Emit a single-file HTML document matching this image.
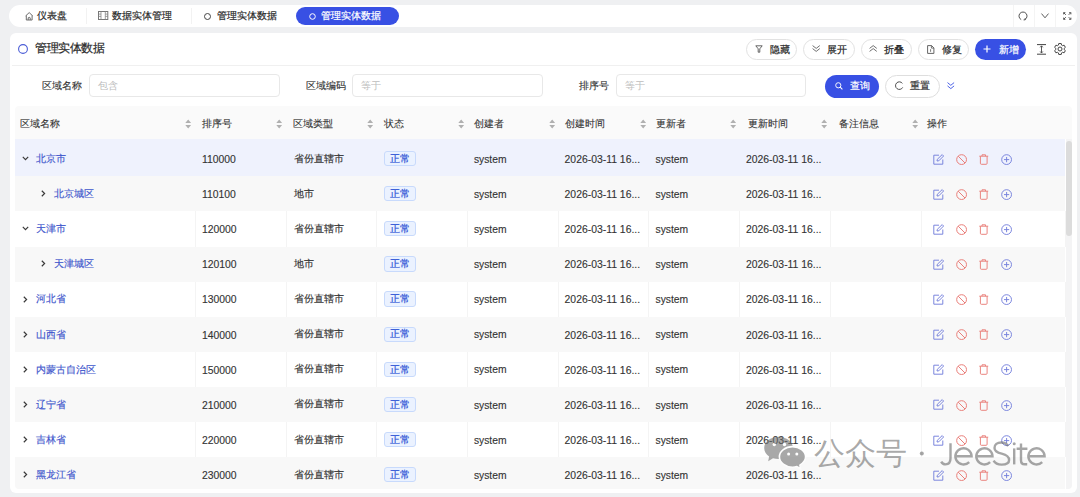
<!DOCTYPE html><html><head><meta charset="utf-8"><style>
*{box-sizing:border-box;margin:0;padding:0}
html,body{width:1080px;height:497px;overflow:hidden;background:#eff0f2;font-family:"Liberation Sans",sans-serif;color:#333}
div,span,svg{position:absolute}
.t{white-space:nowrap;line-height:1}
.cj{font-size:10px}
svg{overflow:visible}
</style></head><body><div style="left:9px;top:5px;width:1068.00px;height:22.00px;background:#fff;border-radius:11px"></div>
<svg style="left:24.5px;top:11.5px" width="8.5" height="8.5" viewBox="0 0 8.5 8.5"><path d="M0.7 3.9 L4.2 0.6 L7.7 3.9 M1.3 3.4 V8 H7.1 V3.4 M3.2 8 V5.8 Q4.2 4.8 5.2 5.8 V8" fill="none" stroke="#666" stroke-width="0.95" stroke-linejoin="round"/></svg>
<div class="t" style="left:37px;top:11.00px;height:10px;line-height:10px;font-size:10px;color:#2c2c2c;-webkit-text-stroke:0.2px #2c2c2c;">仪表盘</div>
<div style="left:86px;top:8px;width:0.80px;height:16.00px;background:#f2f2f2"></div>
<svg style="left:98px;top:11px" width="10.5" height="9" viewBox="0 0 10.5 9"><rect x="0.5" y="0.5" width="9.3" height="8" fill="none" stroke="#777" stroke-width="1"/><path d="M3 0.5 V8.5 M7.3 0.5 V8.5 M0.5 3.1 H3 M0.5 5.4 H3 M7.3 3.1 H9.8 M7.3 5.4 H9.8" fill="none" stroke="#888" stroke-width="0.8"/></svg>
<div class="t" style="left:111.5px;top:11.00px;height:10px;line-height:10px;font-size:10px;color:#2c2c2c;-webkit-text-stroke:0.2px #2c2c2c;">数据实体管理</div>
<div style="left:191px;top:8px;width:0.80px;height:16.00px;background:#f2f2f2"></div>
<svg style="left:204px;top:12.5px" width="7" height="7" viewBox="0 0 7 7"><circle cx="3.5" cy="3.5" r="3" fill="none" stroke="#444" stroke-width="1"/></svg>
<div class="t" style="left:216.5px;top:11.00px;height:10px;line-height:10px;font-size:10px;color:#2c2c2c;-webkit-text-stroke:0.2px #2c2c2c;">管理实体数据</div>
<div style="left:296px;top:7px;width:103.00px;height:17.50px;background:#3850e4;border-radius:9px"></div>
<svg style="left:309px;top:12.5px" width="7" height="7" viewBox="0 0 7 7"><circle cx="3.5" cy="3.5" r="2.8" fill="none" stroke="#fff" stroke-width="1"/></svg>
<div class="t" style="left:321px;top:11.00px;height:10px;line-height:10px;font-size:10px;color:#fff;-webkit-text-stroke:0.2px #fff;">管理实体数据</div>
<div style="left:1012.5px;top:5px;width:1.00px;height:22.00px;background:#f4f4f4"></div>
<div style="left:1033.5px;top:5px;width:1.00px;height:22.00px;background:#f4f4f4"></div>
<div style="left:1055px;top:5px;width:1.00px;height:22.00px;background:#f4f4f4"></div>
<svg style="left:1017.8px;top:11px" width="10" height="10" viewBox="0 0 10 10"><path d="M3.2 8.6 A4 4 0 1 1 6.8 8.6" fill="none" stroke="#555" stroke-width="1"/><path d="M5.6 8.9 L7.3 8.7 L7.1 7.2" fill="none" stroke="#555" stroke-width="1"/></svg>
<svg style="left:1041px;top:12.5px" width="8" height="6" viewBox="0 0 8 6"><path d="M0.5 0.6 L4 4.8 L7.5 0.6" fill="none" stroke="#555" stroke-width="0.95"/></svg>
<svg style="left:1062.5px;top:11.6px" width="8.5" height="8" viewBox="0 0 8.5 8"><path d="M0.8 0.8 L2.8 2.8 M7.7 0.8 L5.7 2.8 M0.8 7.2 L2.8 5.2 M7.7 7.2 L5.7 5.2" fill="none" stroke="#555" stroke-width="1"/><path d="M0.6 2.4 V0.6 H2.4 M6.1 0.6 H7.9 V2.4 M0.6 5.6 V7.4 H2.4 M6.1 7.4 H7.9 V5.6" fill="none" stroke="#555" stroke-width="0.9"/></svg>
<div style="left:10px;top:33px;width:1067.00px;height:460.00px;background:#fff;border-radius:6px"></div>
<svg style="left:18px;top:43.5px" width="10" height="10" viewBox="0 0 10 10"><circle cx="5" cy="5" r="4.4" fill="none" stroke="#4a5cd6" stroke-width="1.1"/></svg>
<div class="t" style="left:35.3px;top:42.40px;height:12px;line-height:12px;font-size:12px;color:#2a2a2a;-webkit-text-stroke:0.2px #2a2a2a;letter-spacing:-0.55px">管理实体数据</div>
<div style="left:12px;top:65px;width:1063.00px;height:1.00px;background:#f0f0f0"></div>
<div style="left:746px;top:38.5px;width:51.00px;height:21.00px;background:#fff;border:1px solid #e2e2e2;border-radius:11px"></div>
<svg style="left:754.5px;top:45px" width="8" height="8" viewBox="0 0 8 8"><path d="M0.8 0.8 H7.2 L4.8 3.8 V7.2 H3.2 V3.8 Z" fill="none" stroke="#555" stroke-width="0.9"/></svg>
<div class="t" style="left:770px;top:44.60px;height:10px;line-height:10px;font-size:10px;color:#262626;-webkit-text-stroke:0.2px #262626;">隐藏</div>
<div style="left:803px;top:38.5px;width:51.50px;height:21.00px;background:#fff;border:1px solid #e2e2e2;border-radius:11px"></div>
<svg style="left:811.8px;top:45.3px" width="8.4" height="7" viewBox="0 0 8.4 7"><path d="M0.6 0.6 L4.2 3.4 L7.8 0.6 M0.6 3.6 L4.2 6.4 L7.8 3.6" fill="none" stroke="#555" stroke-width="0.85"/></svg>
<div class="t" style="left:827px;top:44.60px;height:10px;line-height:10px;font-size:10px;color:#262626;-webkit-text-stroke:0.2px #262626;">展开</div>
<div style="left:860.5px;top:38.5px;width:51.00px;height:21.00px;background:#fff;border:1px solid #e2e2e2;border-radius:11px"></div>
<svg style="left:868.8px;top:45.3px" width="8.4" height="7" viewBox="0 0 8.4 7"><path d="M0.6 6.4 L4.2 3.6 L7.8 6.4 M0.6 3.4 L4.2 0.6 L7.8 3.4" fill="none" stroke="#555" stroke-width="0.85"/></svg>
<div class="t" style="left:884.4px;top:44.60px;height:10px;line-height:10px;font-size:10px;color:#262626;-webkit-text-stroke:0.2px #262626;">折叠</div>
<div style="left:918.3px;top:38.5px;width:50.60px;height:21.00px;background:#fff;border:1px solid #e2e2e2;border-radius:11px"></div>
<svg style="left:926.6px;top:44.8px" width="7.5" height="9" viewBox="0 0 7.5 9"><path d="M0.6 0.6 H4.6 L6.9 2.9 V8.4 H0.6 Z" fill="none" stroke="#555" stroke-width="0.9"/><path d="M4.4 0.6 V3.1 H6.9 M3.6 4.2 V6.8" fill="none" stroke="#555" stroke-width="0.8"/></svg>
<div class="t" style="left:942.2px;top:44.60px;height:10px;line-height:10px;font-size:10px;color:#262626;-webkit-text-stroke:0.2px #262626;">修复</div>
<div style="left:975px;top:38.5px;width:51.30px;height:21.00px;background:#3850e4;border-radius:11px"></div>
<svg style="left:983px;top:45px" width="8" height="8" viewBox="0 0 8 8"><path d="M4 0.5 V7.5 M0.5 4 H7.5" stroke="#fff" stroke-width="1.2"/></svg>
<div class="t" style="left:998.5px;top:44.60px;height:10px;line-height:10px;font-size:10px;color:#fff;-webkit-text-stroke:0.2px #fff;">新增</div>
<svg style="left:1037px;top:44px" width="9" height="11" viewBox="0 0 9 11"><path d="M0 0.6 H9 M0 10.2 H9" fill="none" stroke="#444" stroke-width="1"/><path d="M4.5 2 V8.8" stroke="#444" stroke-width="0.9"/><path d="M3.2 3.3 L4.5 1.8 L5.8 3.3 M3.2 7.5 L4.5 9 L5.8 7.5" fill="none" stroke="#444" stroke-width="0.9"/></svg>
<svg style="left:1054px;top:43.3px" width="12" height="12" viewBox="0 0 12 12"><path d="M4.74 0.54 L7.26 0.54 L7.57 2.11 L8.59 2.69 L10.10 2.18 L11.36 4.36 L10.16 5.42 L10.16 6.58 L11.36 7.64 L10.10 9.82 L8.59 9.31 L7.57 9.89 L7.26 11.46 L4.74 11.46 L4.43 9.89 L3.41 9.31 L1.90 9.82 L0.64 7.64 L1.84 6.58 L1.84 5.42 L0.64 4.36 L1.90 2.18 L3.41 2.69 L4.43 2.11 Z" fill="none" stroke="#444" stroke-width="1" stroke-linejoin="round"/><circle cx="6" cy="6" r="2" fill="none" stroke="#444" stroke-width="1"/></svg>
<div class="t" style="left:42.2px;top:80.80px;height:10px;line-height:10px;font-size:10px;color:#333;font-weight:400;-webkit-text-stroke:0.12px #333">区域名称</div>
<div style="left:89px;top:74.3px;width:190.50px;height:23.00px;background:#fff;border:1px solid #e8e8e8;border-radius:4px"></div>
<div class="t" style="left:97.8px;top:80.80px;height:10px;line-height:10px;font-size:10px;color:#bdbdbd;font-weight:400;">包含</div>
<div class="t" style="left:305.9px;top:80.80px;height:10px;line-height:10px;font-size:10px;color:#333;font-weight:400;-webkit-text-stroke:0.12px #333">区域编码</div>
<div style="left:352.3px;top:74.3px;width:191.10px;height:23.00px;background:#fff;border:1px solid #e8e8e8;border-radius:4px"></div>
<div class="t" style="left:361.1px;top:80.80px;height:10px;line-height:10px;font-size:10px;color:#bdbdbd;font-weight:400;">等于</div>
<div class="t" style="left:579px;top:80.80px;height:10px;line-height:10px;font-size:10px;color:#333;font-weight:400;-webkit-text-stroke:0.12px #333">排序号</div>
<div style="left:616px;top:74.3px;width:190.30px;height:23.00px;background:#fff;border:1px solid #e8e8e8;border-radius:4px"></div>
<div class="t" style="left:624.8px;top:80.80px;height:10px;line-height:10px;font-size:10px;color:#bdbdbd;font-weight:400;">等于</div>
<div style="left:824.7px;top:74.5px;width:54.50px;height:23.00px;background:#3850e4;border-radius:12px"></div>
<svg style="left:835px;top:81.8px" width="8" height="8" viewBox="0 0 8 8"><circle cx="3.3" cy="3.3" r="2.6" fill="none" stroke="#fff" stroke-width="0.95"/><path d="M5.2 5.2 L7.4 7.4" stroke="#fff" stroke-width="1.1"/></svg>
<div class="t" style="left:850px;top:81.00px;height:10px;line-height:10px;font-size:10px;color:#fff;-webkit-text-stroke:0.2px #fff;">查询</div>
<div style="left:885px;top:74.5px;width:54.70px;height:23.00px;background:#fff;border:1px solid #dedede;border-radius:12px"></div>
<svg style="left:894.8px;top:81.3px" width="9" height="9" viewBox="0 0 9 9"><path d="M7.4 2.4 A3.8 3.8 0 1 0 7.7 6.4" fill="none" stroke="#444" stroke-width="0.95"/></svg>
<div class="t" style="left:910.3px;top:81.00px;height:10px;line-height:10px;font-size:10px;color:#333;-webkit-text-stroke:0.2px #333;">重置</div>
<svg style="left:946.6px;top:82px" width="8" height="8" viewBox="0 0 8 8"><path d="M0.5 0.6 L3.8 3.3 L7.1 0.6 M0.5 3.9 L3.8 6.6 L7.1 3.9" fill="none" stroke="#3850e4" stroke-width="0.9"/></svg>
<div style="left:14.5px;top:106px;width:1057.8px;height:382.7px;overflow:hidden;border-radius:4px;background:#fff">
<div style="left:0.0px;top:0px;width:1057.80px;height:33.00px;background:#fafafa"></div>
<div class="t" style="left:5.9px;top:13.00px;height:10px;line-height:10px;font-size:10px;color:#333;font-weight:400;-webkit-text-stroke:0.1px #333">区域名称</div>
<div class="t" style="left:187.2px;top:13.00px;height:10px;line-height:10px;font-size:10px;color:#333;font-weight:400;-webkit-text-stroke:0.1px #333">排序号</div>
<div class="t" style="left:278.0px;top:13.00px;height:10px;line-height:10px;font-size:10px;color:#333;font-weight:400;-webkit-text-stroke:0.1px #333">区域类型</div>
<div class="t" style="left:369.1px;top:13.00px;height:10px;line-height:10px;font-size:10px;color:#333;font-weight:400;-webkit-text-stroke:0.1px #333">状态</div>
<div class="t" style="left:459.9px;top:13.00px;height:10px;line-height:10px;font-size:10px;color:#333;font-weight:400;-webkit-text-stroke:0.1px #333">创建者</div>
<div class="t" style="left:550.5px;top:13.00px;height:10px;line-height:10px;font-size:10px;color:#333;font-weight:400;-webkit-text-stroke:0.1px #333">创建时间</div>
<div class="t" style="left:641.0px;top:13.00px;height:10px;line-height:10px;font-size:10px;color:#333;font-weight:400;-webkit-text-stroke:0.1px #333">更新者</div>
<div class="t" style="left:733.5px;top:13.00px;height:10px;line-height:10px;font-size:10px;color:#333;font-weight:400;-webkit-text-stroke:0.1px #333">更新时间</div>
<div class="t" style="left:824.5px;top:13.00px;height:10px;line-height:10px;font-size:10px;color:#333;font-weight:400;-webkit-text-stroke:0.1px #333">备注信息</div>
<div class="t" style="left:912.8px;top:13.00px;height:10px;line-height:10px;font-size:10px;color:#333;font-weight:400;-webkit-text-stroke:0.1px #333">操作</div>
<svg style="left:170.2px;top:12.6px" width="6.4" height="10" viewBox="0 0 6.4 10"><path d="M0.3 4.1 L3.2 0.5 L6.1 4.1 Z M0.3 6 L3.2 9.6 L6.1 6 Z" fill="#b0b0b0"/></svg>
<svg style="left:261.0px;top:12.6px" width="6.4" height="10" viewBox="0 0 6.4 10"><path d="M0.3 4.1 L3.2 0.5 L6.1 4.1 Z M0.3 6 L3.2 9.6 L6.1 6 Z" fill="#b0b0b0"/></svg>
<svg style="left:352.1px;top:12.6px" width="6.4" height="10" viewBox="0 0 6.4 10"><path d="M0.3 4.1 L3.2 0.5 L6.1 4.1 Z M0.3 6 L3.2 9.6 L6.1 6 Z" fill="#b0b0b0"/></svg>
<svg style="left:443.4px;top:12.6px" width="6.4" height="10" viewBox="0 0 6.4 10"><path d="M0.3 4.1 L3.2 0.5 L6.1 4.1 Z M0.3 6 L3.2 9.6 L6.1 6 Z" fill="#b0b0b0"/></svg>
<svg style="left:534.2px;top:12.6px" width="6.4" height="10" viewBox="0 0 6.4 10"><path d="M0.3 4.1 L3.2 0.5 L6.1 4.1 Z M0.3 6 L3.2 9.6 L6.1 6 Z" fill="#b0b0b0"/></svg>
<svg style="left:625.0px;top:12.6px" width="6.4" height="10" viewBox="0 0 6.4 10"><path d="M0.3 4.1 L3.2 0.5 L6.1 4.1 Z M0.3 6 L3.2 9.6 L6.1 6 Z" fill="#b0b0b0"/></svg>
<svg style="left:715.9px;top:12.6px" width="6.4" height="10" viewBox="0 0 6.4 10"><path d="M0.3 4.1 L3.2 0.5 L6.1 4.1 Z M0.3 6 L3.2 9.6 L6.1 6 Z" fill="#b0b0b0"/></svg>
<svg style="left:806.9px;top:12.6px" width="6.4" height="10" viewBox="0 0 6.4 10"><path d="M0.3 4.1 L3.2 0.5 L6.1 4.1 Z M0.3 6 L3.2 9.6 L6.1 6 Z" fill="#b0b0b0"/></svg>
<svg style="left:897.9px;top:12.6px" width="6.4" height="10" viewBox="0 0 6.4 10"><path d="M0.3 4.1 L3.2 0.5 L6.1 4.1 Z M0.3 6 L3.2 9.6 L6.1 6 Z" fill="#b0b0b0"/></svg>
<div style="left:0.0px;top:33px;width:1050.50px;height:37.32px;background:#eff2fd"></div>
<svg style="left:7.5px;top:50.1px" width="7" height="5" viewBox="0 0 7 5"><path d="M0.8 0.8 L3.5 3.6 L6.2 0.8" fill="none" stroke="#3a3a3a" stroke-width="1.2"/></svg>
<div class="t" style="left:21.6px;top:47.90px;height:10px;line-height:10px;font-size:10px;color:#3d55cc;font-weight:400;-webkit-text-stroke:0.15px #3d55cc">北京市</div>
<div class="t" style="left:187.4px;top:48.90px;height:10.4px;line-height:10.4px;font-size:10.4px;color:#333;font-weight:400;-webkit-text-stroke:0.12px #333">110000</div>
<div class="t" style="left:279.0px;top:47.60px;height:10px;line-height:10px;font-size:10px;color:#333;font-weight:400;-webkit-text-stroke:0.15px #333">省份直辖市</div>
<div style="left:369.5px;top:45.0px;width:31.80px;height:15.20px;background:#ebf2ff;border:1px solid #c8dafc;border-radius:3px"></div>
<div class="t" style="left:375.9px;top:47.85px;height:9.5px;line-height:9.5px;font-size:9.5px;color:#2e54d6;-webkit-text-stroke:0.2px #2e54d6;">正常</div>
<div class="t" style="left:459.4px;top:48.75px;height:10.3px;line-height:10.3px;font-size:10.3px;color:#333;font-weight:400;-webkit-text-stroke:0.12px #333">system</div>
<div class="t" style="left:550.1px;top:48.90px;height:10.4px;line-height:10.4px;font-size:10.4px;color:#333;font-weight:400;-webkit-text-stroke:0.12px #333">2026-03-11 16...</div>
<div class="t" style="left:641.0px;top:48.75px;height:10.3px;line-height:10.3px;font-size:10.3px;color:#333;font-weight:400;-webkit-text-stroke:0.12px #333">system</div>
<div class="t" style="left:731.5px;top:48.90px;height:10.4px;line-height:10.4px;font-size:10.4px;color:#333;font-weight:400;-webkit-text-stroke:0.12px #333">2026-03-11 16...</div>
<svg style="left:918.5px;top:47.6px" width="12" height="11" viewBox="0 0 12 11"><path d="M6 1.2 H0.8 V10.2 H9.8 V5.5" fill="none" stroke="#7480dc" stroke-width="0.95"/><path d="M4 7 L4.3 5.3 L9.2 0.6 L10.6 2 L5.8 6.8 Z" fill="none" stroke="#7480dc" stroke-width="0.95" stroke-linejoin="round"/></svg>
<svg style="left:941.1px;top:47.7px" width="11.2" height="11.2" viewBox="0 0 11.2 11.2"><circle cx="5.6" cy="5.6" r="4.9" fill="none" stroke="#e97d78" stroke-width="1"/><path d="M2.2 2.2 L9 9" stroke="#e97d78" stroke-width="1"/></svg>
<svg style="left:964.8px;top:47.7px" width="9.5" height="11" viewBox="0 0 9.5 11"><path d="M0.3 2.2 H9.2 M3 2.2 V0.8 H6.5 V2.2 M1.4 2.2 V9.3 Q1.4 10.3 2.4 10.3 H7.1 Q8.1 10.3 8.1 9.3 V2.2" fill="none" stroke="#e97d78" stroke-width="0.95"/></svg>
<svg style="left:986.5px;top:47.7px" width="11.2" height="11.2" viewBox="0 0 11.2 11.2"><circle cx="5.6" cy="5.6" r="4.9" fill="none" stroke="#7480dc" stroke-width="0.95"/><path d="M5.6 3 V8.2 M3 5.6 H8.2" stroke="#7480dc" stroke-width="0.95"/></svg>
<div style="left:0.0px;top:70.32px;width:1050.50px;height:35.12px;background:#f8f8f8"></div>
<svg style="left:26.9px;top:84.22px" width="5" height="7" viewBox="0 0 5 7"><path d="M0.8 0.8 L3.6 3.5 L0.8 6.2" fill="none" stroke="#3a3a3a" stroke-width="1.2"/></svg>
<div class="t" style="left:39.3px;top:83.02px;height:10px;line-height:10px;font-size:10px;color:#3d55cc;font-weight:400;-webkit-text-stroke:0.15px #3d55cc">北京城区</div>
<div class="t" style="left:187.4px;top:84.02px;height:10.4px;line-height:10.4px;font-size:10.4px;color:#333;font-weight:400;-webkit-text-stroke:0.12px #333">110100</div>
<div class="t" style="left:279.0px;top:82.72px;height:10px;line-height:10px;font-size:10px;color:#333;font-weight:400;-webkit-text-stroke:0.15px #333">地市</div>
<div style="left:369.5px;top:80.12px;width:31.80px;height:15.20px;background:#ebf2ff;border:1px solid #c8dafc;border-radius:3px"></div>
<div class="t" style="left:375.9px;top:82.97px;height:9.5px;line-height:9.5px;font-size:9.5px;color:#2e54d6;-webkit-text-stroke:0.2px #2e54d6;">正常</div>
<div class="t" style="left:459.4px;top:83.87px;height:10.3px;line-height:10.3px;font-size:10.3px;color:#333;font-weight:400;-webkit-text-stroke:0.12px #333">system</div>
<div class="t" style="left:550.1px;top:84.02px;height:10.4px;line-height:10.4px;font-size:10.4px;color:#333;font-weight:400;-webkit-text-stroke:0.12px #333">2026-03-11 16...</div>
<div class="t" style="left:641.0px;top:83.87px;height:10.3px;line-height:10.3px;font-size:10.3px;color:#333;font-weight:400;-webkit-text-stroke:0.12px #333">system</div>
<div class="t" style="left:731.5px;top:84.02px;height:10.4px;line-height:10.4px;font-size:10.4px;color:#333;font-weight:400;-webkit-text-stroke:0.12px #333">2026-03-11 16...</div>
<svg style="left:918.5px;top:82.72px" width="12" height="11" viewBox="0 0 12 11"><path d="M6 1.2 H0.8 V10.2 H9.8 V5.5" fill="none" stroke="#7480dc" stroke-width="0.95"/><path d="M4 7 L4.3 5.3 L9.2 0.6 L10.6 2 L5.8 6.8 Z" fill="none" stroke="#7480dc" stroke-width="0.95" stroke-linejoin="round"/></svg>
<svg style="left:941.1px;top:82.82px" width="11.2" height="11.2" viewBox="0 0 11.2 11.2"><circle cx="5.6" cy="5.6" r="4.9" fill="none" stroke="#e97d78" stroke-width="1"/><path d="M2.2 2.2 L9 9" stroke="#e97d78" stroke-width="1"/></svg>
<svg style="left:964.8px;top:82.82px" width="9.5" height="11" viewBox="0 0 9.5 11"><path d="M0.3 2.2 H9.2 M3 2.2 V0.8 H6.5 V2.2 M1.4 2.2 V9.3 Q1.4 10.3 2.4 10.3 H7.1 Q8.1 10.3 8.1 9.3 V2.2" fill="none" stroke="#e97d78" stroke-width="0.95"/></svg>
<svg style="left:986.5px;top:82.82px" width="11.2" height="11.2" viewBox="0 0 11.2 11.2"><circle cx="5.6" cy="5.6" r="4.9" fill="none" stroke="#7480dc" stroke-width="0.95"/><path d="M5.6 3 V8.2 M3 5.6 H8.2" stroke="#7480dc" stroke-width="0.95"/></svg>
<div style="left:0.0px;top:105.44px;width:1050.50px;height:35.12px;background:#ffffff"></div>
<div style="left:180.5px;top:105.44px;width:1.00px;height:35.12px;background:#f4f4f4"></div>
<div style="left:271.5px;top:105.44px;width:1.00px;height:35.12px;background:#f4f4f4"></div>
<div style="left:361.5px;top:105.44px;width:1.00px;height:35.12px;background:#f4f4f4"></div>
<div style="left:452.5px;top:105.44px;width:1.00px;height:35.12px;background:#f4f4f4"></div>
<div style="left:543.5px;top:105.44px;width:1.00px;height:35.12px;background:#f4f4f4"></div>
<div style="left:633.5px;top:105.44px;width:1.00px;height:35.12px;background:#f4f4f4"></div>
<div style="left:724.5px;top:105.44px;width:1.00px;height:35.12px;background:#f4f4f4"></div>
<div style="left:815.5px;top:105.44px;width:1.00px;height:35.12px;background:#f4f4f4"></div>
<div style="left:906.5px;top:105.44px;width:1.00px;height:35.12px;background:#f4f4f4"></div>
<div style="left:1050.5px;top:105.44px;width:1.00px;height:35.12px;background:#f4f4f4"></div>
<svg style="left:7.5px;top:120.34px" width="7" height="5" viewBox="0 0 7 5"><path d="M0.8 0.8 L3.5 3.6 L6.2 0.8" fill="none" stroke="#3a3a3a" stroke-width="1.2"/></svg>
<div class="t" style="left:21.6px;top:118.14px;height:10px;line-height:10px;font-size:10px;color:#3d55cc;font-weight:400;-webkit-text-stroke:0.15px #3d55cc">天津市</div>
<div class="t" style="left:187.4px;top:119.14px;height:10.4px;line-height:10.4px;font-size:10.4px;color:#333;font-weight:400;-webkit-text-stroke:0.12px #333">120000</div>
<div class="t" style="left:279.0px;top:117.84px;height:10px;line-height:10px;font-size:10px;color:#333;font-weight:400;-webkit-text-stroke:0.15px #333">省份直辖市</div>
<div style="left:369.5px;top:115.24px;width:31.80px;height:15.20px;background:#ebf2ff;border:1px solid #c8dafc;border-radius:3px"></div>
<div class="t" style="left:375.9px;top:118.09px;height:9.5px;line-height:9.5px;font-size:9.5px;color:#2e54d6;-webkit-text-stroke:0.2px #2e54d6;">正常</div>
<div class="t" style="left:459.4px;top:118.99px;height:10.3px;line-height:10.3px;font-size:10.3px;color:#333;font-weight:400;-webkit-text-stroke:0.12px #333">system</div>
<div class="t" style="left:550.1px;top:119.14px;height:10.4px;line-height:10.4px;font-size:10.4px;color:#333;font-weight:400;-webkit-text-stroke:0.12px #333">2026-03-11 16...</div>
<div class="t" style="left:641.0px;top:118.99px;height:10.3px;line-height:10.3px;font-size:10.3px;color:#333;font-weight:400;-webkit-text-stroke:0.12px #333">system</div>
<div class="t" style="left:731.5px;top:119.14px;height:10.4px;line-height:10.4px;font-size:10.4px;color:#333;font-weight:400;-webkit-text-stroke:0.12px #333">2026-03-11 16...</div>
<svg style="left:918.5px;top:117.84px" width="12" height="11" viewBox="0 0 12 11"><path d="M6 1.2 H0.8 V10.2 H9.8 V5.5" fill="none" stroke="#7480dc" stroke-width="0.95"/><path d="M4 7 L4.3 5.3 L9.2 0.6 L10.6 2 L5.8 6.8 Z" fill="none" stroke="#7480dc" stroke-width="0.95" stroke-linejoin="round"/></svg>
<svg style="left:941.1px;top:117.94px" width="11.2" height="11.2" viewBox="0 0 11.2 11.2"><circle cx="5.6" cy="5.6" r="4.9" fill="none" stroke="#e97d78" stroke-width="1"/><path d="M2.2 2.2 L9 9" stroke="#e97d78" stroke-width="1"/></svg>
<svg style="left:964.8px;top:117.94px" width="9.5" height="11" viewBox="0 0 9.5 11"><path d="M0.3 2.2 H9.2 M3 2.2 V0.8 H6.5 V2.2 M1.4 2.2 V9.3 Q1.4 10.3 2.4 10.3 H7.1 Q8.1 10.3 8.1 9.3 V2.2" fill="none" stroke="#e97d78" stroke-width="0.95"/></svg>
<svg style="left:986.5px;top:117.94px" width="11.2" height="11.2" viewBox="0 0 11.2 11.2"><circle cx="5.6" cy="5.6" r="4.9" fill="none" stroke="#7480dc" stroke-width="0.95"/><path d="M5.6 3 V8.2 M3 5.6 H8.2" stroke="#7480dc" stroke-width="0.95"/></svg>
<div style="left:0.0px;top:140.56px;width:1050.50px;height:35.12px;background:#f8f8f8"></div>
<svg style="left:26.9px;top:154.46px" width="5" height="7" viewBox="0 0 5 7"><path d="M0.8 0.8 L3.6 3.5 L0.8 6.2" fill="none" stroke="#3a3a3a" stroke-width="1.2"/></svg>
<div class="t" style="left:39.3px;top:153.26px;height:10px;line-height:10px;font-size:10px;color:#3d55cc;font-weight:400;-webkit-text-stroke:0.15px #3d55cc">天津城区</div>
<div class="t" style="left:187.4px;top:154.26px;height:10.4px;line-height:10.4px;font-size:10.4px;color:#333;font-weight:400;-webkit-text-stroke:0.12px #333">120100</div>
<div class="t" style="left:279.0px;top:152.96px;height:10px;line-height:10px;font-size:10px;color:#333;font-weight:400;-webkit-text-stroke:0.15px #333">地市</div>
<div style="left:369.5px;top:150.36px;width:31.80px;height:15.20px;background:#ebf2ff;border:1px solid #c8dafc;border-radius:3px"></div>
<div class="t" style="left:375.9px;top:153.21px;height:9.5px;line-height:9.5px;font-size:9.5px;color:#2e54d6;-webkit-text-stroke:0.2px #2e54d6;">正常</div>
<div class="t" style="left:459.4px;top:154.11px;height:10.3px;line-height:10.3px;font-size:10.3px;color:#333;font-weight:400;-webkit-text-stroke:0.12px #333">system</div>
<div class="t" style="left:550.1px;top:154.26px;height:10.4px;line-height:10.4px;font-size:10.4px;color:#333;font-weight:400;-webkit-text-stroke:0.12px #333">2026-03-11 16...</div>
<div class="t" style="left:641.0px;top:154.11px;height:10.3px;line-height:10.3px;font-size:10.3px;color:#333;font-weight:400;-webkit-text-stroke:0.12px #333">system</div>
<div class="t" style="left:731.5px;top:154.26px;height:10.4px;line-height:10.4px;font-size:10.4px;color:#333;font-weight:400;-webkit-text-stroke:0.12px #333">2026-03-11 16...</div>
<svg style="left:918.5px;top:152.96px" width="12" height="11" viewBox="0 0 12 11"><path d="M6 1.2 H0.8 V10.2 H9.8 V5.5" fill="none" stroke="#7480dc" stroke-width="0.95"/><path d="M4 7 L4.3 5.3 L9.2 0.6 L10.6 2 L5.8 6.8 Z" fill="none" stroke="#7480dc" stroke-width="0.95" stroke-linejoin="round"/></svg>
<svg style="left:941.1px;top:153.06px" width="11.2" height="11.2" viewBox="0 0 11.2 11.2"><circle cx="5.6" cy="5.6" r="4.9" fill="none" stroke="#e97d78" stroke-width="1"/><path d="M2.2 2.2 L9 9" stroke="#e97d78" stroke-width="1"/></svg>
<svg style="left:964.8px;top:153.06px" width="9.5" height="11" viewBox="0 0 9.5 11"><path d="M0.3 2.2 H9.2 M3 2.2 V0.8 H6.5 V2.2 M1.4 2.2 V9.3 Q1.4 10.3 2.4 10.3 H7.1 Q8.1 10.3 8.1 9.3 V2.2" fill="none" stroke="#e97d78" stroke-width="0.95"/></svg>
<svg style="left:986.5px;top:153.06px" width="11.2" height="11.2" viewBox="0 0 11.2 11.2"><circle cx="5.6" cy="5.6" r="4.9" fill="none" stroke="#7480dc" stroke-width="0.95"/><path d="M5.6 3 V8.2 M3 5.6 H8.2" stroke="#7480dc" stroke-width="0.95"/></svg>
<div style="left:0.0px;top:175.68px;width:1050.50px;height:35.12px;background:#ffffff"></div>
<div style="left:180.5px;top:175.68px;width:1.00px;height:35.12px;background:#f4f4f4"></div>
<div style="left:271.5px;top:175.68px;width:1.00px;height:35.12px;background:#f4f4f4"></div>
<div style="left:361.5px;top:175.68px;width:1.00px;height:35.12px;background:#f4f4f4"></div>
<div style="left:452.5px;top:175.68px;width:1.00px;height:35.12px;background:#f4f4f4"></div>
<div style="left:543.5px;top:175.68px;width:1.00px;height:35.12px;background:#f4f4f4"></div>
<div style="left:633.5px;top:175.68px;width:1.00px;height:35.12px;background:#f4f4f4"></div>
<div style="left:724.5px;top:175.68px;width:1.00px;height:35.12px;background:#f4f4f4"></div>
<div style="left:815.5px;top:175.68px;width:1.00px;height:35.12px;background:#f4f4f4"></div>
<div style="left:906.5px;top:175.68px;width:1.00px;height:35.12px;background:#f4f4f4"></div>
<div style="left:1050.5px;top:175.68px;width:1.00px;height:35.12px;background:#f4f4f4"></div>
<svg style="left:8.5px;top:189.58px" width="5" height="7" viewBox="0 0 5 7"><path d="M0.8 0.8 L3.6 3.5 L0.8 6.2" fill="none" stroke="#3a3a3a" stroke-width="1.2"/></svg>
<div class="t" style="left:21.6px;top:188.38px;height:10px;line-height:10px;font-size:10px;color:#3d55cc;font-weight:400;-webkit-text-stroke:0.15px #3d55cc">河北省</div>
<div class="t" style="left:187.4px;top:189.38px;height:10.4px;line-height:10.4px;font-size:10.4px;color:#333;font-weight:400;-webkit-text-stroke:0.12px #333">130000</div>
<div class="t" style="left:279.0px;top:188.08px;height:10px;line-height:10px;font-size:10px;color:#333;font-weight:400;-webkit-text-stroke:0.15px #333">省份直辖市</div>
<div style="left:369.5px;top:185.48px;width:31.80px;height:15.20px;background:#ebf2ff;border:1px solid #c8dafc;border-radius:3px"></div>
<div class="t" style="left:375.9px;top:188.33px;height:9.5px;line-height:9.5px;font-size:9.5px;color:#2e54d6;-webkit-text-stroke:0.2px #2e54d6;">正常</div>
<div class="t" style="left:459.4px;top:189.23px;height:10.3px;line-height:10.3px;font-size:10.3px;color:#333;font-weight:400;-webkit-text-stroke:0.12px #333">system</div>
<div class="t" style="left:550.1px;top:189.38px;height:10.4px;line-height:10.4px;font-size:10.4px;color:#333;font-weight:400;-webkit-text-stroke:0.12px #333">2026-03-11 16...</div>
<div class="t" style="left:641.0px;top:189.23px;height:10.3px;line-height:10.3px;font-size:10.3px;color:#333;font-weight:400;-webkit-text-stroke:0.12px #333">system</div>
<div class="t" style="left:731.5px;top:189.38px;height:10.4px;line-height:10.4px;font-size:10.4px;color:#333;font-weight:400;-webkit-text-stroke:0.12px #333">2026-03-11 16...</div>
<svg style="left:918.5px;top:188.08px" width="12" height="11" viewBox="0 0 12 11"><path d="M6 1.2 H0.8 V10.2 H9.8 V5.5" fill="none" stroke="#7480dc" stroke-width="0.95"/><path d="M4 7 L4.3 5.3 L9.2 0.6 L10.6 2 L5.8 6.8 Z" fill="none" stroke="#7480dc" stroke-width="0.95" stroke-linejoin="round"/></svg>
<svg style="left:941.1px;top:188.18px" width="11.2" height="11.2" viewBox="0 0 11.2 11.2"><circle cx="5.6" cy="5.6" r="4.9" fill="none" stroke="#e97d78" stroke-width="1"/><path d="M2.2 2.2 L9 9" stroke="#e97d78" stroke-width="1"/></svg>
<svg style="left:964.8px;top:188.18px" width="9.5" height="11" viewBox="0 0 9.5 11"><path d="M0.3 2.2 H9.2 M3 2.2 V0.8 H6.5 V2.2 M1.4 2.2 V9.3 Q1.4 10.3 2.4 10.3 H7.1 Q8.1 10.3 8.1 9.3 V2.2" fill="none" stroke="#e97d78" stroke-width="0.95"/></svg>
<svg style="left:986.5px;top:188.18px" width="11.2" height="11.2" viewBox="0 0 11.2 11.2"><circle cx="5.6" cy="5.6" r="4.9" fill="none" stroke="#7480dc" stroke-width="0.95"/><path d="M5.6 3 V8.2 M3 5.6 H8.2" stroke="#7480dc" stroke-width="0.95"/></svg>
<div style="left:0.0px;top:210.8px;width:1050.50px;height:35.12px;background:#f8f8f8"></div>
<svg style="left:8.5px;top:224.7px" width="5" height="7" viewBox="0 0 5 7"><path d="M0.8 0.8 L3.6 3.5 L0.8 6.2" fill="none" stroke="#3a3a3a" stroke-width="1.2"/></svg>
<div class="t" style="left:21.6px;top:223.50px;height:10px;line-height:10px;font-size:10px;color:#3d55cc;font-weight:400;-webkit-text-stroke:0.15px #3d55cc">山西省</div>
<div class="t" style="left:187.4px;top:224.50px;height:10.4px;line-height:10.4px;font-size:10.4px;color:#333;font-weight:400;-webkit-text-stroke:0.12px #333">140000</div>
<div class="t" style="left:279.0px;top:223.20px;height:10px;line-height:10px;font-size:10px;color:#333;font-weight:400;-webkit-text-stroke:0.15px #333">省份直辖市</div>
<div style="left:369.5px;top:220.6px;width:31.80px;height:15.20px;background:#ebf2ff;border:1px solid #c8dafc;border-radius:3px"></div>
<div class="t" style="left:375.9px;top:223.45px;height:9.5px;line-height:9.5px;font-size:9.5px;color:#2e54d6;-webkit-text-stroke:0.2px #2e54d6;">正常</div>
<div class="t" style="left:459.4px;top:224.35px;height:10.3px;line-height:10.3px;font-size:10.3px;color:#333;font-weight:400;-webkit-text-stroke:0.12px #333">system</div>
<div class="t" style="left:550.1px;top:224.50px;height:10.4px;line-height:10.4px;font-size:10.4px;color:#333;font-weight:400;-webkit-text-stroke:0.12px #333">2026-03-11 16...</div>
<div class="t" style="left:641.0px;top:224.35px;height:10.3px;line-height:10.3px;font-size:10.3px;color:#333;font-weight:400;-webkit-text-stroke:0.12px #333">system</div>
<div class="t" style="left:731.5px;top:224.50px;height:10.4px;line-height:10.4px;font-size:10.4px;color:#333;font-weight:400;-webkit-text-stroke:0.12px #333">2026-03-11 16...</div>
<svg style="left:918.5px;top:223.2px" width="12" height="11" viewBox="0 0 12 11"><path d="M6 1.2 H0.8 V10.2 H9.8 V5.5" fill="none" stroke="#7480dc" stroke-width="0.95"/><path d="M4 7 L4.3 5.3 L9.2 0.6 L10.6 2 L5.8 6.8 Z" fill="none" stroke="#7480dc" stroke-width="0.95" stroke-linejoin="round"/></svg>
<svg style="left:941.1px;top:223.3px" width="11.2" height="11.2" viewBox="0 0 11.2 11.2"><circle cx="5.6" cy="5.6" r="4.9" fill="none" stroke="#e97d78" stroke-width="1"/><path d="M2.2 2.2 L9 9" stroke="#e97d78" stroke-width="1"/></svg>
<svg style="left:964.8px;top:223.3px" width="9.5" height="11" viewBox="0 0 9.5 11"><path d="M0.3 2.2 H9.2 M3 2.2 V0.8 H6.5 V2.2 M1.4 2.2 V9.3 Q1.4 10.3 2.4 10.3 H7.1 Q8.1 10.3 8.1 9.3 V2.2" fill="none" stroke="#e97d78" stroke-width="0.95"/></svg>
<svg style="left:986.5px;top:223.3px" width="11.2" height="11.2" viewBox="0 0 11.2 11.2"><circle cx="5.6" cy="5.6" r="4.9" fill="none" stroke="#7480dc" stroke-width="0.95"/><path d="M5.6 3 V8.2 M3 5.6 H8.2" stroke="#7480dc" stroke-width="0.95"/></svg>
<div style="left:0.0px;top:245.92px;width:1050.50px;height:35.12px;background:#ffffff"></div>
<div style="left:180.5px;top:245.92px;width:1.00px;height:35.12px;background:#f4f4f4"></div>
<div style="left:271.5px;top:245.92px;width:1.00px;height:35.12px;background:#f4f4f4"></div>
<div style="left:361.5px;top:245.92px;width:1.00px;height:35.12px;background:#f4f4f4"></div>
<div style="left:452.5px;top:245.92px;width:1.00px;height:35.12px;background:#f4f4f4"></div>
<div style="left:543.5px;top:245.92px;width:1.00px;height:35.12px;background:#f4f4f4"></div>
<div style="left:633.5px;top:245.92px;width:1.00px;height:35.12px;background:#f4f4f4"></div>
<div style="left:724.5px;top:245.92px;width:1.00px;height:35.12px;background:#f4f4f4"></div>
<div style="left:815.5px;top:245.92px;width:1.00px;height:35.12px;background:#f4f4f4"></div>
<div style="left:906.5px;top:245.92px;width:1.00px;height:35.12px;background:#f4f4f4"></div>
<div style="left:1050.5px;top:245.92px;width:1.00px;height:35.12px;background:#f4f4f4"></div>
<svg style="left:8.5px;top:259.82px" width="5" height="7" viewBox="0 0 5 7"><path d="M0.8 0.8 L3.6 3.5 L0.8 6.2" fill="none" stroke="#3a3a3a" stroke-width="1.2"/></svg>
<div class="t" style="left:21.6px;top:258.62px;height:10px;line-height:10px;font-size:10px;color:#3d55cc;font-weight:400;-webkit-text-stroke:0.15px #3d55cc">内蒙古自治区</div>
<div class="t" style="left:187.4px;top:259.62px;height:10.4px;line-height:10.4px;font-size:10.4px;color:#333;font-weight:400;-webkit-text-stroke:0.12px #333">150000</div>
<div class="t" style="left:279.0px;top:258.32px;height:10px;line-height:10px;font-size:10px;color:#333;font-weight:400;-webkit-text-stroke:0.15px #333">省份直辖市</div>
<div style="left:369.5px;top:255.72px;width:31.80px;height:15.20px;background:#ebf2ff;border:1px solid #c8dafc;border-radius:3px"></div>
<div class="t" style="left:375.9px;top:258.57px;height:9.5px;line-height:9.5px;font-size:9.5px;color:#2e54d6;-webkit-text-stroke:0.2px #2e54d6;">正常</div>
<div class="t" style="left:459.4px;top:259.47px;height:10.3px;line-height:10.3px;font-size:10.3px;color:#333;font-weight:400;-webkit-text-stroke:0.12px #333">system</div>
<div class="t" style="left:550.1px;top:259.62px;height:10.4px;line-height:10.4px;font-size:10.4px;color:#333;font-weight:400;-webkit-text-stroke:0.12px #333">2026-03-11 16...</div>
<div class="t" style="left:641.0px;top:259.47px;height:10.3px;line-height:10.3px;font-size:10.3px;color:#333;font-weight:400;-webkit-text-stroke:0.12px #333">system</div>
<div class="t" style="left:731.5px;top:259.62px;height:10.4px;line-height:10.4px;font-size:10.4px;color:#333;font-weight:400;-webkit-text-stroke:0.12px #333">2026-03-11 16...</div>
<svg style="left:918.5px;top:258.32px" width="12" height="11" viewBox="0 0 12 11"><path d="M6 1.2 H0.8 V10.2 H9.8 V5.5" fill="none" stroke="#7480dc" stroke-width="0.95"/><path d="M4 7 L4.3 5.3 L9.2 0.6 L10.6 2 L5.8 6.8 Z" fill="none" stroke="#7480dc" stroke-width="0.95" stroke-linejoin="round"/></svg>
<svg style="left:941.1px;top:258.42px" width="11.2" height="11.2" viewBox="0 0 11.2 11.2"><circle cx="5.6" cy="5.6" r="4.9" fill="none" stroke="#e97d78" stroke-width="1"/><path d="M2.2 2.2 L9 9" stroke="#e97d78" stroke-width="1"/></svg>
<svg style="left:964.8px;top:258.42px" width="9.5" height="11" viewBox="0 0 9.5 11"><path d="M0.3 2.2 H9.2 M3 2.2 V0.8 H6.5 V2.2 M1.4 2.2 V9.3 Q1.4 10.3 2.4 10.3 H7.1 Q8.1 10.3 8.1 9.3 V2.2" fill="none" stroke="#e97d78" stroke-width="0.95"/></svg>
<svg style="left:986.5px;top:258.42px" width="11.2" height="11.2" viewBox="0 0 11.2 11.2"><circle cx="5.6" cy="5.6" r="4.9" fill="none" stroke="#7480dc" stroke-width="0.95"/><path d="M5.6 3 V8.2 M3 5.6 H8.2" stroke="#7480dc" stroke-width="0.95"/></svg>
<div style="left:0.0px;top:281.04px;width:1050.50px;height:35.12px;background:#f8f8f8"></div>
<svg style="left:8.5px;top:294.94px" width="5" height="7" viewBox="0 0 5 7"><path d="M0.8 0.8 L3.6 3.5 L0.8 6.2" fill="none" stroke="#3a3a3a" stroke-width="1.2"/></svg>
<div class="t" style="left:21.6px;top:293.74px;height:10px;line-height:10px;font-size:10px;color:#3d55cc;font-weight:400;-webkit-text-stroke:0.15px #3d55cc">辽宁省</div>
<div class="t" style="left:187.4px;top:294.74px;height:10.4px;line-height:10.4px;font-size:10.4px;color:#333;font-weight:400;-webkit-text-stroke:0.12px #333">210000</div>
<div class="t" style="left:279.0px;top:293.44px;height:10px;line-height:10px;font-size:10px;color:#333;font-weight:400;-webkit-text-stroke:0.15px #333">省份直辖市</div>
<div style="left:369.5px;top:290.84px;width:31.80px;height:15.20px;background:#ebf2ff;border:1px solid #c8dafc;border-radius:3px"></div>
<div class="t" style="left:375.9px;top:293.69px;height:9.5px;line-height:9.5px;font-size:9.5px;color:#2e54d6;-webkit-text-stroke:0.2px #2e54d6;">正常</div>
<div class="t" style="left:459.4px;top:294.59px;height:10.3px;line-height:10.3px;font-size:10.3px;color:#333;font-weight:400;-webkit-text-stroke:0.12px #333">system</div>
<div class="t" style="left:550.1px;top:294.74px;height:10.4px;line-height:10.4px;font-size:10.4px;color:#333;font-weight:400;-webkit-text-stroke:0.12px #333">2026-03-11 16...</div>
<div class="t" style="left:641.0px;top:294.59px;height:10.3px;line-height:10.3px;font-size:10.3px;color:#333;font-weight:400;-webkit-text-stroke:0.12px #333">system</div>
<div class="t" style="left:731.5px;top:294.74px;height:10.4px;line-height:10.4px;font-size:10.4px;color:#333;font-weight:400;-webkit-text-stroke:0.12px #333">2026-03-11 16...</div>
<svg style="left:918.5px;top:293.44px" width="12" height="11" viewBox="0 0 12 11"><path d="M6 1.2 H0.8 V10.2 H9.8 V5.5" fill="none" stroke="#7480dc" stroke-width="0.95"/><path d="M4 7 L4.3 5.3 L9.2 0.6 L10.6 2 L5.8 6.8 Z" fill="none" stroke="#7480dc" stroke-width="0.95" stroke-linejoin="round"/></svg>
<svg style="left:941.1px;top:293.54px" width="11.2" height="11.2" viewBox="0 0 11.2 11.2"><circle cx="5.6" cy="5.6" r="4.9" fill="none" stroke="#e97d78" stroke-width="1"/><path d="M2.2 2.2 L9 9" stroke="#e97d78" stroke-width="1"/></svg>
<svg style="left:964.8px;top:293.54px" width="9.5" height="11" viewBox="0 0 9.5 11"><path d="M0.3 2.2 H9.2 M3 2.2 V0.8 H6.5 V2.2 M1.4 2.2 V9.3 Q1.4 10.3 2.4 10.3 H7.1 Q8.1 10.3 8.1 9.3 V2.2" fill="none" stroke="#e97d78" stroke-width="0.95"/></svg>
<svg style="left:986.5px;top:293.54px" width="11.2" height="11.2" viewBox="0 0 11.2 11.2"><circle cx="5.6" cy="5.6" r="4.9" fill="none" stroke="#7480dc" stroke-width="0.95"/><path d="M5.6 3 V8.2 M3 5.6 H8.2" stroke="#7480dc" stroke-width="0.95"/></svg>
<div style="left:0.0px;top:316.16px;width:1050.50px;height:35.12px;background:#ffffff"></div>
<div style="left:180.5px;top:316.16px;width:1.00px;height:35.12px;background:#f4f4f4"></div>
<div style="left:271.5px;top:316.16px;width:1.00px;height:35.12px;background:#f4f4f4"></div>
<div style="left:361.5px;top:316.16px;width:1.00px;height:35.12px;background:#f4f4f4"></div>
<div style="left:452.5px;top:316.16px;width:1.00px;height:35.12px;background:#f4f4f4"></div>
<div style="left:543.5px;top:316.16px;width:1.00px;height:35.12px;background:#f4f4f4"></div>
<div style="left:633.5px;top:316.16px;width:1.00px;height:35.12px;background:#f4f4f4"></div>
<div style="left:724.5px;top:316.16px;width:1.00px;height:35.12px;background:#f4f4f4"></div>
<div style="left:815.5px;top:316.16px;width:1.00px;height:35.12px;background:#f4f4f4"></div>
<div style="left:906.5px;top:316.16px;width:1.00px;height:35.12px;background:#f4f4f4"></div>
<div style="left:1050.5px;top:316.16px;width:1.00px;height:35.12px;background:#f4f4f4"></div>
<svg style="left:8.5px;top:330.06px" width="5" height="7" viewBox="0 0 5 7"><path d="M0.8 0.8 L3.6 3.5 L0.8 6.2" fill="none" stroke="#3a3a3a" stroke-width="1.2"/></svg>
<div class="t" style="left:21.6px;top:328.86px;height:10px;line-height:10px;font-size:10px;color:#3d55cc;font-weight:400;-webkit-text-stroke:0.15px #3d55cc">吉林省</div>
<div class="t" style="left:187.4px;top:329.86px;height:10.4px;line-height:10.4px;font-size:10.4px;color:#333;font-weight:400;-webkit-text-stroke:0.12px #333">220000</div>
<div class="t" style="left:279.0px;top:328.56px;height:10px;line-height:10px;font-size:10px;color:#333;font-weight:400;-webkit-text-stroke:0.15px #333">省份直辖市</div>
<div style="left:369.5px;top:325.96px;width:31.80px;height:15.20px;background:#ebf2ff;border:1px solid #c8dafc;border-radius:3px"></div>
<div class="t" style="left:375.9px;top:328.81px;height:9.5px;line-height:9.5px;font-size:9.5px;color:#2e54d6;-webkit-text-stroke:0.2px #2e54d6;">正常</div>
<div class="t" style="left:459.4px;top:329.71px;height:10.3px;line-height:10.3px;font-size:10.3px;color:#333;font-weight:400;-webkit-text-stroke:0.12px #333">system</div>
<div class="t" style="left:550.1px;top:329.86px;height:10.4px;line-height:10.4px;font-size:10.4px;color:#333;font-weight:400;-webkit-text-stroke:0.12px #333">2026-03-11 16...</div>
<div class="t" style="left:641.0px;top:329.71px;height:10.3px;line-height:10.3px;font-size:10.3px;color:#333;font-weight:400;-webkit-text-stroke:0.12px #333">system</div>
<div class="t" style="left:731.5px;top:329.86px;height:10.4px;line-height:10.4px;font-size:10.4px;color:#333;font-weight:400;-webkit-text-stroke:0.12px #333">2026-03-11 16...</div>
<svg style="left:918.5px;top:328.56px" width="12" height="11" viewBox="0 0 12 11"><path d="M6 1.2 H0.8 V10.2 H9.8 V5.5" fill="none" stroke="#7480dc" stroke-width="0.95"/><path d="M4 7 L4.3 5.3 L9.2 0.6 L10.6 2 L5.8 6.8 Z" fill="none" stroke="#7480dc" stroke-width="0.95" stroke-linejoin="round"/></svg>
<svg style="left:941.1px;top:328.66px" width="11.2" height="11.2" viewBox="0 0 11.2 11.2"><circle cx="5.6" cy="5.6" r="4.9" fill="none" stroke="#e97d78" stroke-width="1"/><path d="M2.2 2.2 L9 9" stroke="#e97d78" stroke-width="1"/></svg>
<svg style="left:964.8px;top:328.66px" width="9.5" height="11" viewBox="0 0 9.5 11"><path d="M0.3 2.2 H9.2 M3 2.2 V0.8 H6.5 V2.2 M1.4 2.2 V9.3 Q1.4 10.3 2.4 10.3 H7.1 Q8.1 10.3 8.1 9.3 V2.2" fill="none" stroke="#e97d78" stroke-width="0.95"/></svg>
<svg style="left:986.5px;top:328.66px" width="11.2" height="11.2" viewBox="0 0 11.2 11.2"><circle cx="5.6" cy="5.6" r="4.9" fill="none" stroke="#7480dc" stroke-width="0.95"/><path d="M5.6 3 V8.2 M3 5.6 H8.2" stroke="#7480dc" stroke-width="0.95"/></svg>
<div style="left:0.0px;top:351.28px;width:1050.50px;height:35.12px;background:#f8f8f8"></div>
<svg style="left:8.5px;top:365.18px" width="5" height="7" viewBox="0 0 5 7"><path d="M0.8 0.8 L3.6 3.5 L0.8 6.2" fill="none" stroke="#3a3a3a" stroke-width="1.2"/></svg>
<div class="t" style="left:21.6px;top:363.98px;height:10px;line-height:10px;font-size:10px;color:#3d55cc;font-weight:400;-webkit-text-stroke:0.15px #3d55cc">黑龙江省</div>
<div class="t" style="left:187.4px;top:364.98px;height:10.4px;line-height:10.4px;font-size:10.4px;color:#333;font-weight:400;-webkit-text-stroke:0.12px #333">230000</div>
<div class="t" style="left:279.0px;top:363.68px;height:10px;line-height:10px;font-size:10px;color:#333;font-weight:400;-webkit-text-stroke:0.15px #333">省份直辖市</div>
<div style="left:369.5px;top:361.08px;width:31.80px;height:15.20px;background:#ebf2ff;border:1px solid #c8dafc;border-radius:3px"></div>
<div class="t" style="left:375.9px;top:363.93px;height:9.5px;line-height:9.5px;font-size:9.5px;color:#2e54d6;-webkit-text-stroke:0.2px #2e54d6;">正常</div>
<div class="t" style="left:459.4px;top:364.83px;height:10.3px;line-height:10.3px;font-size:10.3px;color:#333;font-weight:400;-webkit-text-stroke:0.12px #333">system</div>
<div class="t" style="left:550.1px;top:364.98px;height:10.4px;line-height:10.4px;font-size:10.4px;color:#333;font-weight:400;-webkit-text-stroke:0.12px #333">2026-03-11 16...</div>
<div class="t" style="left:641.0px;top:364.83px;height:10.3px;line-height:10.3px;font-size:10.3px;color:#333;font-weight:400;-webkit-text-stroke:0.12px #333">system</div>
<div class="t" style="left:731.5px;top:364.98px;height:10.4px;line-height:10.4px;font-size:10.4px;color:#333;font-weight:400;-webkit-text-stroke:0.12px #333">2026-03-11 16...</div>
<svg style="left:918.5px;top:363.68px" width="12" height="11" viewBox="0 0 12 11"><path d="M6 1.2 H0.8 V10.2 H9.8 V5.5" fill="none" stroke="#7480dc" stroke-width="0.95"/><path d="M4 7 L4.3 5.3 L9.2 0.6 L10.6 2 L5.8 6.8 Z" fill="none" stroke="#7480dc" stroke-width="0.95" stroke-linejoin="round"/></svg>
<svg style="left:941.1px;top:363.78px" width="11.2" height="11.2" viewBox="0 0 11.2 11.2"><circle cx="5.6" cy="5.6" r="4.9" fill="none" stroke="#e97d78" stroke-width="1"/><path d="M2.2 2.2 L9 9" stroke="#e97d78" stroke-width="1"/></svg>
<svg style="left:964.8px;top:363.78px" width="9.5" height="11" viewBox="0 0 9.5 11"><path d="M0.3 2.2 H9.2 M3 2.2 V0.8 H6.5 V2.2 M1.4 2.2 V9.3 Q1.4 10.3 2.4 10.3 H7.1 Q8.1 10.3 8.1 9.3 V2.2" fill="none" stroke="#e97d78" stroke-width="0.95"/></svg>
<svg style="left:986.5px;top:363.78px" width="11.2" height="11.2" viewBox="0 0 11.2 11.2"><circle cx="5.6" cy="5.6" r="4.9" fill="none" stroke="#7480dc" stroke-width="0.95"/><path d="M5.6 3 V8.2 M3 5.6 H8.2" stroke="#7480dc" stroke-width="0.95"/></svg>
<div style="left:1051.0px;top:33px;width:6.80px;height:349.70px;background:#f4f4f5"></div>
<div style="left:1051.9px;top:34.8px;width:5.60px;height:95.20px;background:#dcdcdc;border-radius:3px"></div>
</div>
<svg style="left:763px;top:436px" width="45" height="34" viewBox="0 0 45 34">
<g opacity="0.6">
<path d="M15.5 0.8 C7.5 0.8 1.2 5.8 1.2 12 C1.2 15.4 3.1 18.4 6.1 20.5 L5.2 25.2 L10 22.3 C11.7 22.8 13.6 23.1 15.5 23.1 C23.5 23.1 30 18.2 30 12 C30 5.8 23.5 0.8 15.5 0.8 Z" fill="#707070"/>
<circle cx="11.3" cy="8.5" r="1.7" fill="#fff"/><circle cx="21.5" cy="8.5" r="1.7" fill="#fff"/>
<path d="M29.5 10.6 C22.5 10.6 16.4 15 16.4 20.8 C16.4 26.6 22.5 31.2 29.5 31.2 C31 31.2 32.5 31 33.9 30.6 L37.6 32.8 L36.9 29.1 C39.8 27.3 42.6 24.3 42.6 20.8 C42.6 15 36.5 10.6 29.5 10.6 Z" fill="#707070" stroke="#fff" stroke-width="1.6"/>
<circle cx="25.6" cy="18" r="1.5" fill="#fff"/><circle cx="33.8" cy="18" r="1.5" fill="#fff"/>
</g></svg>
<div class="t" style="left:814px;top:437.70px;height:31px;line-height:31px;font-size:31px;color:rgba(95,95,95,0.55);font-weight:400;">公众号</div>
<svg style="left:0;top:0" width="1080" height="497" viewBox="0 0 1080 497"><g opacity="0.55"><g fill="none" stroke="rgb(95,95,95)" stroke-width="2.4" stroke-linecap="butt">
<path d="M950.5 443.3 V458.3 Q950.5 464.4 945.6 464.4 Q942.6 464.4 941.2 461.6"/>
<path d="M955.4 456.2 H971.6 A8.1 8.1 0 1 0 969.2 462.1"/>
<path d="M976.3 456.2 H992.5 A8.1 8.1 0 1 0 990.1 462.1"/>
<path d="M1008.2 446 C1006.7 443.8 1004.2 442.5 1001.2 442.5 C997.2 442.5 994.5 444.7 994.5 447.9 C994.5 451.4 997.7 452.6 1001.7 453.6 C1006.2 454.7 1009.1 456.3 1009.1 460 C1009.1 463 1006.1 464.6 1001.6 464.6 C998.1 464.6 995.1 463.2 993.6 460.6"/>
<path d="M1014.2 448.4 V464.4"/>
<path d="M1021 443.6 V460.3 Q1021 464.3 1024.6 464.3 H1027.2 M1016.6 448.8 H1027.4"/>
<path d="M1028.4 456.2 H1044.6 A8.1 8.1 0 1 0 1042.2 462.1"/>
</g><circle cx="1014.2" cy="443.7" r="1.5" fill="rgb(95,95,95)"/><circle cx="921.8" cy="453.6" r="2" fill="rgb(95,95,95)"/></g></svg></body></html>
